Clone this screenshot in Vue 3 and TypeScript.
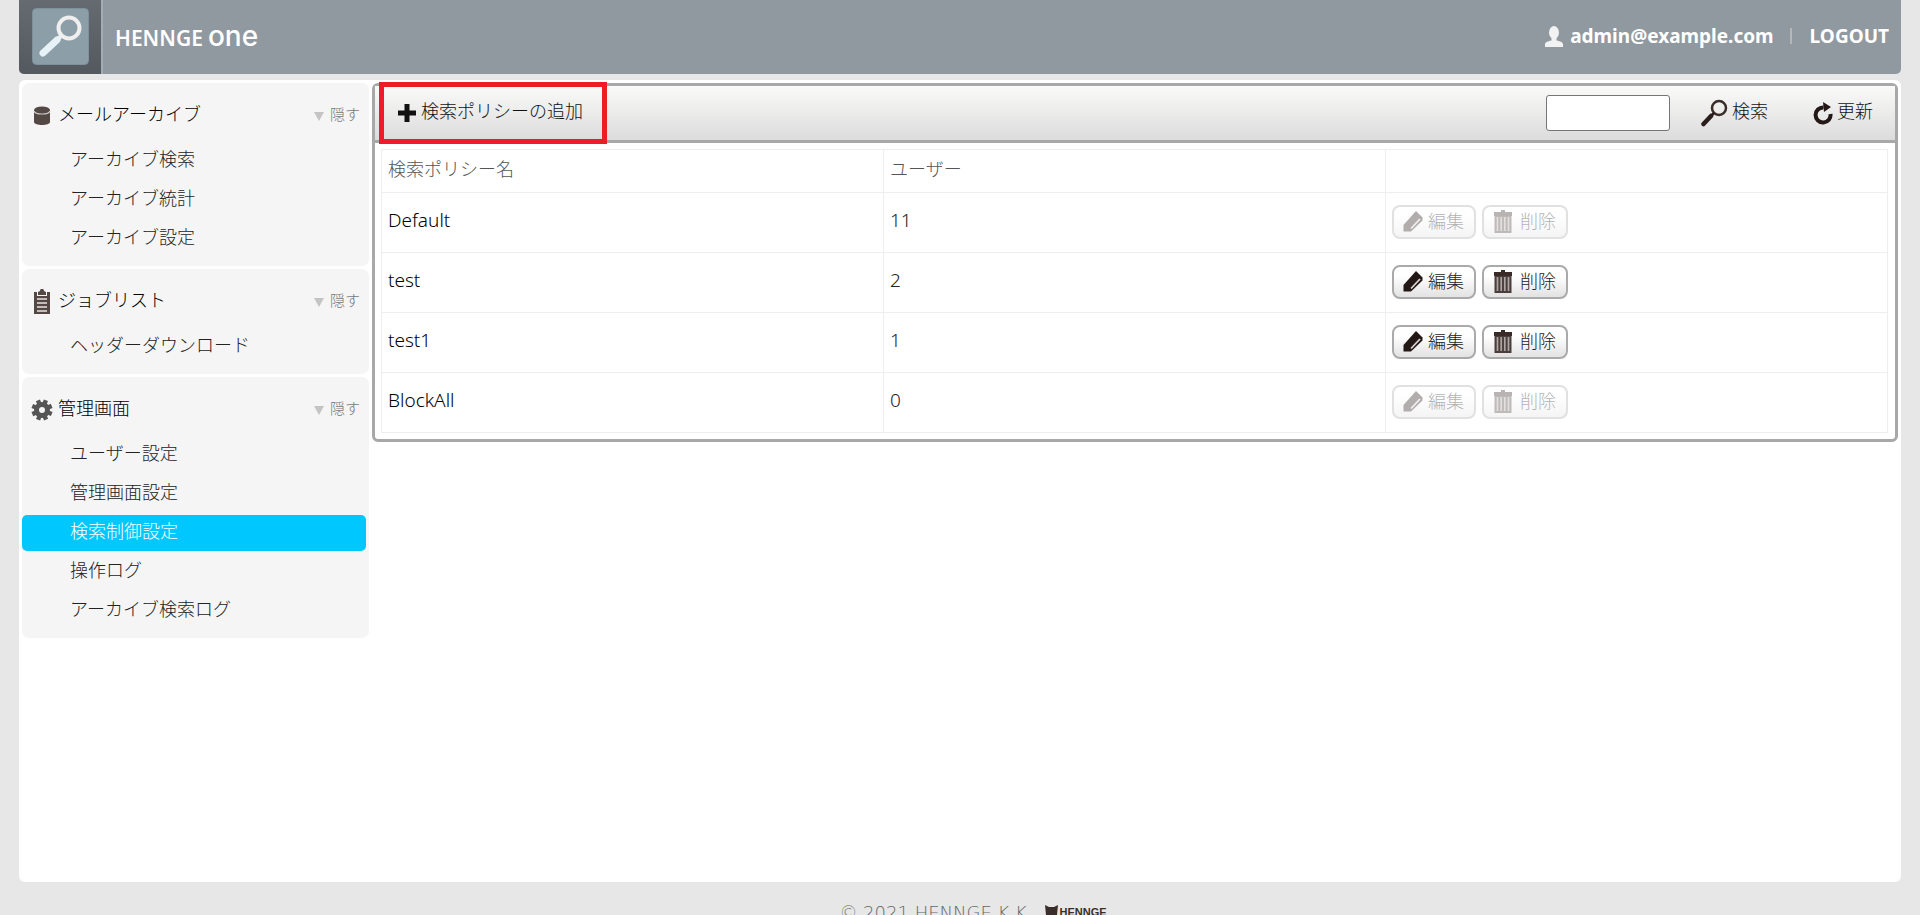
<script setup lang="ts">
import { ref } from 'vue'

interface Section {
  title: string
  icon: 'db' | 'clip' | 'gear'
  items: string[]
}
interface Policy {
  name: string
  users: number
  editable: boolean
}

const sections: Section[] = [
  { title: 'メールアーカイブ', icon: 'db', items: ['アーカイブ検索', 'アーカイブ統計', 'アーカイブ設定'] },
  { title: 'ジョブリスト', icon: 'clip', items: ['ヘッダーダウンロード'] },
  {
    title: '管理画面',
    icon: 'gear',
    items: ['ユーザー設定', '管理画面設定', '検索制御設定', '操作ログ', 'アーカイブ検索ログ'],
  },
]

const policies: Policy[] = [
  { name: 'Default', users: 11, editable: false },
  { name: 'test', users: 2, editable: true },
  { name: 'test1', users: 1, editable: true },
  { name: 'BlockAll', users: 0, editable: false },
]

const active = ref('検索制御設定')
const query = ref('')
const teeth = [0, 45, 90, 135, 180, 225, 270, 315]
</script>

<template>
  <div class="page">
    <header class="header">
      <div class="logo">
        <svg width="57" height="57" viewBox="0 0 57 57" aria-hidden="true">
          <rect x="0.5" y="0.5" width="56" height="56" rx="4" fill="#8c9ea8" stroke="#7f919b" />
          <path d="M25 32L11 45" stroke="#e6f1f8" stroke-width="7" stroke-linecap="round" />
          <path d="M30 27L25 32" stroke="#e6f1f8" stroke-width="4" />
          <circle cx="37" cy="20" r="10.5" fill="none" stroke="#f0efee" stroke-width="4" />
        </svg>
      </div>
      <h1 class="brand">HENNGE <span class="one">one</span></h1>
      <nav class="account">
        <a class="user" href="#">
          <svg width="18" height="21" viewBox="0 0 18 21" fill="#f2f2f2" aria-hidden="true">
            <ellipse cx="9" cy="6.5" rx="5" ry="6.5" />
            <path d="M6.500 11h5v3.500c4 1 6.500 1.500 6.500 4V21H0v-2.500c0-2.500 2.500-3 6.500-4z" />
          </svg>
          admin@example.com
        </a>
        <span class="bar"></span>
        <a href="#">LOGOUT</a>
      </nav>
    </header>

    <main class="main">
      <aside class="side">
        <section v-for="s in sections" :key="s.title" class="group">
          <div class="group-head">
            <svg v-if="s.icon === 'db'" class="ico" width="22" height="22" viewBox="0 0 22 22" aria-hidden="true">
              <path d="M3 5v12c0 4 16 4 16 0V5z" fill="#544845" />
              <ellipse cx="11" cy="5" rx="8" ry="3.500" fill="#544845" />
              <path d="M3 6c1 4 15 4 16 0" fill="none" stroke="#cfcac8" stroke-width="1.200" />
            </svg>
            <svg v-else-if="s.icon === 'clip'" class="ico" width="22" height="26" viewBox="0 0 22 26" aria-hidden="true">
              <path d="M3 3h3v4h10V3h3v22H3z" fill="#544845" />
              <path d="M7 6V3l2-1c0-3 4-3 4 0l2 1v3z" fill="#544845" />
              <path d="M6 10h10M6 14h10M6 18h10M6 22h10" stroke="#e6e3e2" stroke-width="1.300" />
            </svg>
            <svg v-else class="ico" width="22" height="22" viewBox="-11 -11 22 22" aria-hidden="true">
              <rect
                v-for="t in teeth"
                :key="t"
                x="-2.200"
                y="-10.500"
                width="4.400"
                height="6"
                fill="#555"
                :transform="`rotate(${t + 22})`"
              />
              <circle r="5.500" fill="none" stroke="#555" stroke-width="5" />
            </svg>
            <h2>{{ s.title }}</h2>
            <button class="toggle" type="button"><span class="tri"></span>隠す</button>
          </div>
          <ul>
            <li v-for="i in s.items" :key="i">
              <a href="#" :class="{ on: i === active }" @click.prevent="active = i">{{ i }}</a>
            </li>
          </ul>
        </section>
      </aside>

      <section class="panel">
        <div class="toolbar">
          <button class="tool add" type="button">
            <svg width="20" height="20" viewBox="0 0 20 20" aria-hidden="true">
              <path d="M10 1v18M1 10h18" stroke="#111" stroke-width="5" />
            </svg>
            検索ポリシーの追加
          </button>
          <input v-model="query" class="query" type="text" aria-label="検索" />
          <button class="tool find" type="button">
            <svg width="27" height="28" viewBox="0 0 27 28" aria-hidden="true">
              <circle cx="18" cy="9" r="7" fill="none" stroke="#3a2c29" stroke-width="2.500" />
              <path d="M13 14l-4 4" stroke="#2a1d1a" stroke-width="2.500" />
              <path d="M10 17l-7.500 8" stroke="#2a1d1a" stroke-width="4.500" stroke-linecap="round" />
            </svg>
            検索
          </button>
          <button class="tool reload" type="button">
            <svg width="20" height="24" viewBox="0 0 20 24" aria-hidden="true">
              <path d="M10.500 6.500A7.500 7.500 0 1 0 17.500 13" fill="none" stroke="#231815" stroke-width="4" />
              <path d="M10 1l8 5-7 5z" fill="#231815" />
            </svg>
            更新
          </button>
        </div>
        <table>
          <thead>
            <tr>
              <th>検索ポリシー名</th>
              <th>ユーザー</th>
              <th></th>
            </tr>
          </thead>
          <tbody>
            <tr v-for="p in policies" :key="p.name">
              <td class="name">{{ p.name }}</td>
              <td class="count">{{ p.users }}</td>
              <td>
                <div class="acts">
                  <button class="act" type="button" :disabled="!p.editable">
                    <svg width="20" height="22" viewBox="0 0 20 22" aria-hidden="true">
                      <path d="M13 0l6.500 6.500v3L8 20.500H0.500V14z" fill="#231815" />
                      <path d="M17 8L8 17.500" stroke="#d8d4d2" stroke-width="1.800" />
                    </svg>
                    編集
                  </button>
                  <button class="act del" type="button" :disabled="!p.editable">
                    <svg width="20" height="24" viewBox="0 0 20 24" aria-hidden="true">
                      <path d="M1 2h7V0h4v2h7v4H1z" fill="#3a2a28" />
                      <path d="M1.500 6h17v17h-17z" fill="#4a3d3b" />
                      <path d="M4.500 7v14M8.200 7v14M11.800 7v14M15.500 7v14" stroke="#aea6a4" stroke-width="1.700" />
                    </svg>
                    削除
                  </button>
                </div>
              </td>
            </tr>
          </tbody>
        </table>
      </section>
    </main>

    <footer class="footer">
      <span>© 2021 HENNGE K.K.</span>
      <span class="mark">
        <svg width="13" height="14" viewBox="0 0 13 14" aria-hidden="true">
          <path d="M0 0l4 2h5l4-2-1 10-5.500 4L1 10z" fill="#3a2e2c" />
        </svg>
        HENNGE
      </span>
    </footer>
  </div>
</template>

<style>
body {
  background: #e7e7e7;
  overflow: hidden;
}
</style>

<style scoped>
.page {
  box-sizing: border-box;
  height: 100vh;
  padding: 0 19px;
  display: flex;
  flex-direction: column;
  font: 18px/34px "Noto Sans", "Noto Sans CJK JP", sans-serif;
  color: #222;
  font-weight: 300;
}
.page * {
  box-sizing: border-box;
}
h1, h2, ul {
  margin: 0;
  padding: 0;
  list-style: none;
}
a {
  color: inherit;
  text-decoration: none;
}
button {
  font: inherit;
  color: inherit;
  border: 0;
  padding: 0;
  background: none;
  display: flex;
  align-items: center;
  white-space: nowrap;
}
svg {
  flex: none;
}
.header {
  flex: none;
  height: 74px;
  display: flex;
  background: #9199a0;
  border-radius: 0 0 5px 5px;
  overflow: hidden;
  color: #fff;
}
.logo {
  width: 84px;
  padding: 8px 0 0 13px;
  border-right: 2px solid #a5abb5;
  background: linear-gradient(#666a71, #54585f);
}
.brand {
  padding-left: 12px;
  display: flex;
  align-items: baseline;
  gap: 5px;
  font: 600 21px/74px "Noto Sans", sans-serif;
}
.one {
  font: 500 28px/72px "Inter", sans-serif;
}
.account {
  margin-left: auto;
  padding-right: 12px;
  height: 72px;
  display: flex;
  align-items: center;
  font-size: 19px;
  font-weight: 700;
}
.user {
  display: flex;
  align-items: center;
  gap: 7px;
}
.bar {
  width: 2px;
  height: 16px;
  margin: 0 18px 0 16px;
  background: #b4b8bb;
}
.main {
  flex: 1;
  min-height: 0;
  margin-top: 6px;
  padding: 3px;
  display: flex;
  align-items: flex-start;
  gap: 3px;
  background: #fff;
  border-radius: 6px;
}
.side {
  flex: none;
  width: 347px;
  display: grid;
  gap: 3px;
}
.group {
  padding-bottom: 6px;
  background: #f5f5f5;
  border-radius: 7px;
}
.group-head {
  height: 60px;
  padding: 2px 9px 0;
  display: flex;
  align-items: center;
}
.ico {
  margin: 4px 5px 0 0;
}
h2 {
  font: inherit;
  color: #000;
}
.toggle {
  margin-left: auto;
  gap: 6px;
  font-size: 15px;
  color: #777;
}
.tri {
  border: 5px solid transparent;
  border-top: 9px solid #c4c4c4;
  border-bottom: 0;
  margin-top: 4px;
}
li {
  padding: 0 3px 3px 0;
}
li a {
  display: block;
  height: 36px;
  padding-left: 48px;
  border-radius: 5px;
  line-height: 32px;
}
li a.on {
  background: #00c8ff;
  color: #fff;
}
.panel {
  flex: 1;
  min-width: 0;
  border: 3px solid #a8a8a8;
  border-radius: 6px;
}
.toolbar {
  height: 57px;
  display: flex;
  align-items: center;
  border-bottom: 3px solid #a8a8a8;
  background: linear-gradient(#fafaf9, #dcdcdc);
}
.tool {
  height: 50px;
  padding-bottom: 4px;
  gap: 4px;
  color: #111;
}
.add {
  position: relative;
  padding-left: 22px;
}
.add::after {
  content: "";
  position: absolute;
  inset: -6px -24px -6px 4px;
  border: 5px solid #ee1c24;
}
.tool svg {
  margin-top: 4px;
}
.query {
  width: 124px;
  height: 36px;
  margin-left: auto;
  border: 1px solid #767676;
  border-radius: 3px;
  background: #fff;
  font: inherit;
}
.find {
  margin: 0 45px 0 31px;
}
.reload {
  margin-right: 22px;
}
table {
  width: calc(100% - 13px);
  margin: 6px;
  border-collapse: collapse;
  table-layout: fixed;
}
th,
td {
  height: 60px;
  padding: 0 6px 6px;
  border: 1px solid #eee;
  text-align: left;
  font-weight: inherit;
}
th {
  height: 43px;
  padding-bottom: 4px;
  color: #555;
}
.name,
.count {
  font-size: 19px;
}
.name {
  color: #000;
}
.acts {
  display: flex;
  gap: 6px;
  padding-top: 4px;
}
.act {
  height: 34px;
  padding: 0 10px 2px 9px;
  gap: 5px;
  border: 2px solid #aaa;
  border-radius: 8px;
  background: linear-gradient(#fff 30%, #e2e2e2);
}
.act.del {
  gap: 7px;
}
.act svg {
  margin-top: 3px;
}
.act:disabled {
  opacity: 0.35;
}
.footer {
  flex: none;
  height: 33px;
  padding-top: 18px;
  padding-left: 26px;
  overflow: hidden;
  display: flex;
  justify-content: center;
  gap: 12px;
  color: #666;
  font-family: "DejaVu Sans", sans-serif;
  font-size: 18px;
  line-height: 26px;
}
.mark {
  display: flex;
  gap: 2px;
  align-items: center;
  padding-top: 8px;
  font: bold 11px/26px "Liberation Sans", sans-serif;
  color: #3a2e2c;
}
</style>
